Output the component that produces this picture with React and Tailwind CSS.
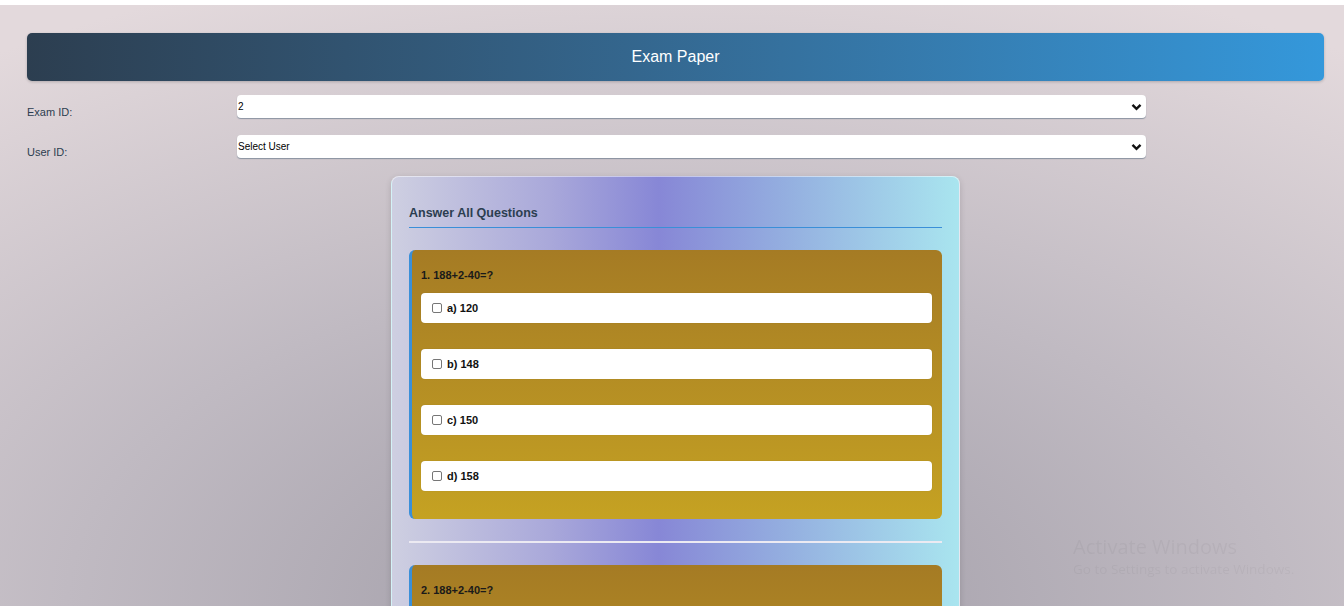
const Chevron = () => (
  <svg className="pointer-events-none absolute right-[4px] top-1/2 -translate-y-1/2" width="11" height="8" viewBox="0 0 11 8">
    <path d="M1.5 1.8 L5.5 5.8 L9.5 1.8" fill="none" stroke="#111" strokeWidth="2.4" />
  </svg>
);

const SelectRow = ({ label, value, options, className }) => (
  <div className={`flex h-[23px] items-start ${className}`}>
    <label className="h-[23px] w-[210px] pt-[10px] text-[11px] leading-[14px] text-[#2c3e50]">{label}</label>
    <div className="relative w-[909px]">
      <select
        defaultValue={value}
        className="block h-[23px] w-full appearance-none rounded-[4px] bg-white pl-[1px] text-[10px] text-black shadow-[0_1px_1px_rgba(90,110,130,0.6)] outline-none"
      >
        {options.map((o) => (
          <option key={o} value={o}>{o}</option>
        ))}
      </select>
      <Chevron />
    </div>
  </div>
);

const questions = [
  { q: "1. 188+2-40=?", opts: ["a) 120", "b) 148", "c) 150", "d) 158"] },
  { q: "2. 188+2-40=?", opts: ["a) 120", "b) 148", "c) 150", "d) 158"] },
];

const Question = ({ item }) => (
  <div className="rounded-[6px] border-l-[3px] border-[#3a8fd8] bg-linear-to-b from-[#a57b24] to-[#c5a222] pb-[28px] pl-[9px] pr-[10px] pt-[18px]">
    <div className="mb-[11px] text-[11px] font-bold leading-[14px] text-[#1a1a1a]">{item.q}</div>
    <div className="flex flex-col gap-[26px]">
      {item.opts.map((o) => (
        <label key={o} className="flex h-[30px] items-center rounded-[4px] bg-white pl-[11px] shadow-[0_0_1px_rgba(0,0,0,0.2)]">
          <input type="checkbox" className="mr-[5px] h-[10px] w-[10px] appearance-none rounded-[2px] border border-[#767676] bg-white" />
          <span className="text-[11px] font-bold text-[#111]">{o}</span>
        </label>
      ))}
    </div>
  </div>
);

export default function App() {
  return (
    <div className="relative min-h-[606px] bg-fixed bg-[radial-gradient(ellipse_90%_110%_at_50%_100%,#9f9ba6_0%,#c0bac2_50%,#e3d9dc_100%)] font-['Liberation_Sans',Arial,sans-serif]">
      <div className="h-[5px] bg-white" />
      <div className="pb-[40px] pl-[27px] pr-[20px] pt-[28px]">
        <div className="flex h-[48px] items-center justify-center rounded-[5px] bg-linear-to-r from-[#2c3e50] to-[#3498db] shadow-[0_1px_3px_rgba(0,0,0,0.2)]">
          <h1 className="text-[16px] text-white">Exam Paper</h1>
        </div>

        <SelectRow className="mt-[14px]" label="Exam ID:" value="2" options={["1", "2", "3"]} />
        <SelectRow className="mt-[17px]" label="User ID:" value="Select User" options={["Select User", "User 1", "User 2"]} />

        <div className="mx-auto mt-[18px] w-[569px] rounded-[8px] border border-white/50 bg-[linear-gradient(to_right,#cecfe1_0%,#a9a8da_28%,#8787d6_47%,#93acdf_68%,#a9e5ef_100%)] px-[17px] pb-[20px] pt-[27px] shadow-[0_2px_6px_rgba(0,0,0,0.15)]">
          <h2 className="border-b border-[#3a8fd8] pb-[4px] text-[12.5px] font-bold text-[#2c3e50]">Answer All Questions</h2>
          <div className="mt-[22px]">
            {questions.map((item, i) => (
              <div key={i}>
                {i > 0 && <div className="my-[22px] h-[2px] bg-[#eceaf2]" />}
                <Question item={item} />
              </div>
            ))}
          </div>
        </div>
      </div>

      <div className="pointer-events-none fixed left-[1073px] top-[535px] font-['Open_Sans',sans-serif] text-[#000]/[0.04]">
        <div className="text-[20px] leading-[24px]">Activate Windows</div>
        <div className="text-[13.5px] leading-[20px]">Go to Settings to activate Windows.</div>
      </div>
    </div>
  );
}
